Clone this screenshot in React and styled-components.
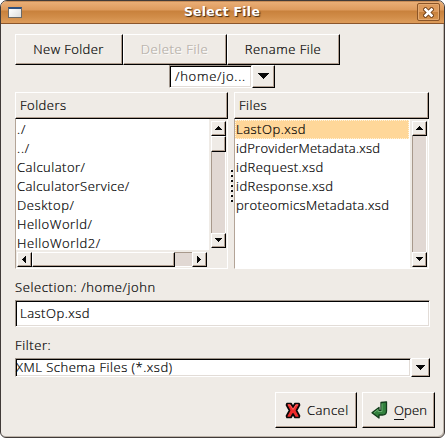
import React from 'react';
import styled, { createGlobalStyle, css } from 'styled-components';

const Global = createGlobalStyle`
  * { box-sizing: border-box; }
  body { margin: 0; background: #fff; }
`;

const raised = css`
  background: #efebe6;
  border: 1px solid;
  border-color: #fff #000 #000 #fff;
  box-shadow: inset -1px -1px #b09e90;
`;

const Window = styled.div`
  width: 445px;
  height: 438px;
  display: flex;
  flex-direction: column;
  overflow: hidden;
  background: #efebe6;
  border: 1px solid #403a38;
  border-radius: 7px 7px 6px 6px;
  box-shadow: inset -1px -1px #bdb4aa;
  font: 300 13px/19px 'Open Sans', 'Noto Sans', sans-serif;
  color: #000;
`;

const TitleBar = styled.header`
  height: 23px;
  flex: none;
  display: flex;
  align-items: center;
  justify-content: space-between;
  padding: 0 4px 0 7px;
  border-bottom: 1px solid #8b562c;
  background: linear-gradient(#a66a38 0, #e9ae76 1px, #dd9a5c 9px, #c8813c 10px, #d18d49 16px, #dc9a58 21px);
`;

const WindowIcon = styled.span`
  width: 14px;
  height: 11px;
  margin-right: 5px;
  border: 1px solid #6c6a68;
  border-top: 2px solid #2e5080;
  background: linear-gradient(135deg, #fff, #ddd);
`;

const Title = styled.h1`
  margin: 0;
  font: bold 12.4px/20px 'DejaVu Sans', sans-serif;
  letter-spacing: 0.3px;
  color: #fff;
  text-shadow: 1px 1px 1px #3f2510;
`;

const CloseButton = styled.button`
  width: 23px;
  height: 18px;
  padding: 0;
  display: grid;
  place-items: center;
  border: 1px solid #8a5427;
  border-radius: 2px;
  background: linear-gradient(#dd9a5c 0 8px, #c8803b 8px, #d79450);
  box-shadow: inset 0 0 0 1px #e4a970;
`;

const Body = styled.main`
  flex: 1;
  padding: 10px 9px 9px 14px;
  display: flex;
  flex-direction: column;
`;

const Text = styled.span`
  display: block;
  white-space: pre;
  letter-spacing: ${p => p.$ls || 0}px;
  -webkit-text-stroke: 0.2px currentColor;
`;

const Toolbar = styled.div`
  display: flex;
  height: 31px;
`;

const ToolButton = styled.button`
  ${raised}
  width: ${p => p.$w}px;
  height: 31px;
  padding: 0 1px 1px 0;
  display: flex;
  justify-content: center;
  align-items: center;
  font: inherit;
  color: #000;
  &:disabled {
    color: #b4aea7;
    text-shadow: 1px 1px #fff;
  }
`;

const PathRow = styled.div`
  display: flex;
  height: 23px;
  margin-left: 154px;
`;

const Sunken = styled.div`
  width: ${p => p.$w}px;
  height: ${p => p.$h}px;
  padding: 0 0 0 ${p => p.$pad || 0}px;
  display: flex;
  align-items: center;
  background: #fff;
  border: 1px solid;
  border-color: #9e9389 #fff #fff #9e9389;
  box-shadow: inset 1px 1px #000, inset -1px -1px #e2dcd7;
`;

const Square = styled.button`
  ${raised}
  flex: none;
  width: ${p => p.$w || 15}px;
  height: ${p => p.$h || 15}px;
  padding: 0 1px 1px 0;
  display: grid;
  place-items: center;
`;

const Panes = styled.div`
  display: flex;
  height: 177px;
  margin-top: 4px;
`;

const Pane = styled.section`
  width: ${p => p.$w}px;
  display: flex;
  flex-direction: column;
`;

const Header = styled.div`
  ${raised}
  height: 27px;
  padding: 3px 0 0 ${p => p.$pad}px;
`;

const ListFrame = styled.div`
  height: 150px;
  display: grid;
  grid-template-columns: 1fr 18px;
  grid-template-rows: ${p => (p.$hscroll ? '131px 18px' : '149px')};
  border-left: 1px solid #b3a497;
  border-right: 1px solid #fff;
  border-bottom: 1px solid #fff;
`;

const List = styled.div`
  background: #fff;
  padding-top: 1px;
`;

const Row = styled.div`
  height: 19px;
  padding-left: 1px;
  border: 0 dotted #fff;
  ${p => p.$selected && css`
    background: #ffd799;
    margin-right: 1px;
    border: 1px dotted #fff4dc;
    padding-left: 0;
    line-height: 17px;
  `}
`;

const VScroll = styled.div`
  display: flex;
  flex-direction: column;
  padding: 2px 1px ${p => p.$bottom}px 2px;
`;

const HScroll = styled.div`
  display: flex;
  padding: 2px 2px 1px 1px;
`;

const Thumb = styled.div`
  ${raised}
  width: ${p => p.$w || 15}px;
  height: ${p => p.$h || 15}px;
`;

const Trough = styled.div`
  flex: 1;
  background: #e1d8d3;
  ${p => p.$horizontal
    ? css`border-top: 1px solid #a8998c; border-bottom: 1px solid #fff;`
    : css`border-left: 1px solid #a8998c; border-right: 1px solid #fff;`}
`;

const Splitter = styled.div`
  width: 6px;
  display: flex;
  flex-direction: column;
  align-items: flex-end;
  gap: 3px;
  padding: 78px 1px 0 0;
`;

const Grip = styled.i`
  width: 2px;
  height: 2px;
  background: #111;
  box-shadow: -1px -1px #fff;
`;

const Label = styled.div`
  height: 19px;
  margin-top: ${p => p.$mt}px;
`;

const Spaced = styled.div`
  display: flex;
  margin-top: ${p => p.$mt}px;
`;

const Actions = styled.footer`
  display: flex;
  justify-content: flex-end;
  gap: 5px;
  margin-top: 15px;
`;

const ActionButton = styled.button`
  ${raised}
  width: ${p => p.$w}px;
  height: 36px;
  padding: 0 0 0 ${p => p.$pad}px;
  display: flex;
  align-items: center;
  gap: ${p => p.$gap}px;
  font: inherit;
  color: #000;
`;

const Mnemonic = styled.span`
  display: inline-block;
  height: 19px;
  border-bottom: 1px solid #111;
`;

const arrows = {
  up: 'M3 0h1v1h1v1h1v1h1v1H0V3h1V2h1V1h1z',
  down: 'M0 0h7v1H6v1H5v1H4v1H3V3H2V2H1V1H0z',
  left: 'M3 0h1v7H3V6H2V5H1V4H0V3h1V2h1V1h1z',
  right: 'M0 0h1v1h1v1h1v1h1v1H3v1H2v1H1v1H0z',
  drop: 'M0 0h11v1h-1v1H9v1H8v1H7v1H6v1H5V5H4V4H3V3H2V2H1V1H0z',
  menu: 'M0 0h9v1H8v1H7v1H6v1H5v1H4V4H3V3H2V2H1V1H0z',
};
const sizes = { up: [7, 4], down: [7, 4], left: [4, 7], right: [4, 7], drop: [11, 6], menu: [9, 5] };

const Arrow = ({ dir }) => (
  <svg width={sizes[dir][0]} height={sizes[dir][1]} display="block" shapeRendering="crispEdges">
    <path d={arrows[dir]} fill="#080808" />
  </svg>
);

const CrossIcon = () => (
  <svg width="16" height="17" viewBox="0 0 16 17">
    <path d="M2 1.500h4l2 3.500 2-3.500h4l.5 1.500-3 5.500 3 5.500-.5 1.500h-4l-2-3.500-2 3.500H2L1.500 14l3-5.500-3-5.500z" fill="#ed2b2b" stroke="#090909" strokeWidth="1.700" strokeLinejoin="round" />
    <path d="M3 3h2l3 4.500L11 3h2" fill="none" stroke="#ff6964" />
  </svg>
);

const EnterIcon = () => (
  <svg width="17" height="18" viewBox="0 0 17 18">
    <path d="M10 1.500l5.500-.7v9.200c0 3-2 4-4 4H8v3L1 11.800 8 6.500V9.500h2z" fill="#32813d" stroke="#123c1b" strokeWidth="1.300" strokeLinejoin="round" />
    <path d="M11 2.500v8H7V8.500L3 11.700" fill="none" stroke="#68ad70" />
  </svg>
);

const folders = [
  ['./', 1], ['../', 0.8], ['Calculator/', 0.5], ['CalculatorService/', 0.45],
  ['Desktop/', 0.6], ['HelloWorld/', 0.55], ['HelloWorld2/', 0.58],
];
const files = [
  ['LastOp.xsd', 0.5], ['idProviderMetadata.xsd', 0.26], ['idRequest.xsd', 0.45],
  ['idResponse.xsd', 0.45], ['proteomicsMetadata.xsd', 0.38],
];

export default function App() {
  return (
    <>
      <Global />
      <Window>
        <TitleBar>
          <WindowIcon />
          <Title>Select File</Title>
          <CloseButton aria-label="Close">
            <svg width="11" height="11" viewBox="0 0 11 11">
              <path d="M2.500 2.500l6 6m0-6l-6 6" stroke="#75441c" strokeWidth="4.500" strokeLinecap="square" />
              <path d="M2.500 2.500l6 6m0-6l-6 6" stroke="#fff" strokeWidth="2.500" strokeLinecap="square" />
            </svg>
          </CloseButton>
        </TitleBar>
        <Body>
          <Toolbar>
            <ToolButton $w={108}><Text $ls={0.4}>New Folder</Text></ToolButton>
            <ToolButton $w={104} disabled><Text $ls={0.6}>Delete File</Text></ToolButton>
            <ToolButton $w={113}><Text $ls={0.5}>Rename File</Text></ToolButton>
          </Toolbar>
          <PathRow>
            <Sunken $w={83} $h={23} $pad={5}><Text $ls={0.75}>/home/jo...</Text></Sunken>
            <Square $w={23} $h={23}><Arrow dir="drop" /></Square>
          </PathRow>
          <Panes>
            <Pane $w={213}>
              <Header $pad={4}><Text $ls={0.5}>Folders</Text></Header>
              <ListFrame $hscroll>
                <List>{folders.map(([n, ls]) => <Row key={n}><Text $ls={ls}>{n}</Text></Row>)}</List>
                <VScroll $bottom={2}>
                  <Square><Arrow dir="up" /></Square>
                  <Thumb $h={16} />
                  <Trough />
                  <Square><Arrow dir="down" /></Square>
                </VScroll>
                <HScroll>
                  <Square><Arrow dir="left" /></Square>
                  <Thumb $w={143} />
                  <Trough $horizontal />
                  <Square><Arrow dir="right" /></Square>
                </HScroll>
              </ListFrame>
            </Pane>
            <Splitter>{[0, 1, 2, 3, 4, 5, 6].map(i => <Grip key={i} />)}</Splitter>
            <Pane $w={195}>
              <Header $pad={4}><Text $ls={0.5}>Files</Text></Header>
              <ListFrame>
                <List>{files.map(([n, ls], i) => <Row key={n} $selected={i === 0}><Text $ls={ls}>{n}</Text></Row>)}</List>
                <VScroll $bottom={1}>
                  <Square><Arrow dir="up" /></Square>
                  <Trough />
                  <Square><Arrow dir="down" /></Square>
                </VScroll>
              </ListFrame>
            </Pane>
          </Panes>
          <Label $mt={9}><Text $ls={0.6}>Selection: /home/john</Text></Label>
          <Spaced $mt={3}>
            <Sunken $w={415} $h={27} $pad={4}><Text $ls={0.5}>LastOp.xsd</Text></Sunken>
          </Spaced>
          <Label $mt={9}><Text $ls={0.6}>Filter:</Text></Label>
          <Spaced $mt={3}>
            <Sunken $w={396} $h={19}><Text $ls={0.5}>XML Schema Files (*.xsd)</Text></Sunken>
            <Square $w={19} $h={19}><Arrow dir="menu" /></Square>
          </Spaced>
          <Actions>
            <ActionButton $w={82} $pad={9} $gap={6}><CrossIcon /><Text $ls={0.45}>Cancel</Text></ActionButton>
            <ActionButton $w={73} $pad={8} $gap={6}><EnterIcon /><Text $ls={0.1}><Mnemonic>O</Mnemonic>pen</Text></ActionButton>
          </Actions>
        </Body>
      </Window>
    </>
  );
}
